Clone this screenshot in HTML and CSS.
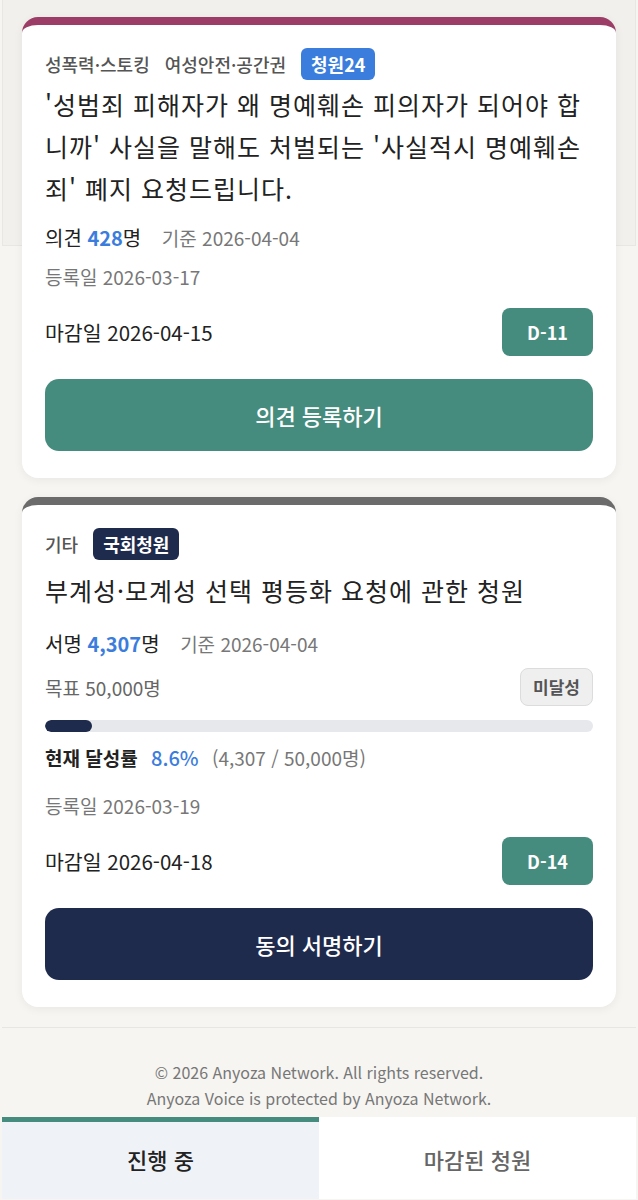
FILE: index.html
```html
<!DOCTYPE html>
<html lang="ko">
<head>
    <meta charset="UTF-8">
    <meta name="viewport" content="width=device-width, initial-scale=1.0">
    <title>Anyoza Voice - 진행 중인 청원</title>
    <link rel="stylesheet" href="styles.css">
</head>
<body>
    <div class="list">
        <div class="card card-opinion">
            <div class="tags">
                <span class="tag">성폭력·스토킹</span>
                <span class="tag">여성안전·공간권</span>
                <span class="source source-24">청원24</span>
            </div>
            <h2 class="title">'성범죄 피해자가 왜 명예훼손 피의자가 되어야 합니까' 사실을 말해도 처벌되는 '사실적시 명예훼손죄' 폐지 요청드립니다.</h2>
            <div class="count">의견 <strong>428</strong>명 <span class="basis">기준 2026-04-04</span></div>
            <div class="date">등록일 2026-03-17</div>
            <div class="deadline">
                <span>마감일 2026-04-15</span>
                <span class="dday">D-11</span>
            </div>
            <button class="action action-opinion">의견 등록하기</button>
        </div>

        <div class="card card-sign">
            <div class="tags">
                <span class="tag">기타</span>
                <span class="source source-assembly">국회청원</span>
            </div>
            <h2 class="title">부계성·모계성 선택 평등화 요청에 관한 청원</h2>
            <div class="count">서명 <strong>4,307</strong>명 <span class="basis">기준 2026-04-04</span></div>
            <div class="goal">
                <span>목표 50,000명</span>
                <span class="status">미달성</span>
            </div>
            <div class="progress"><div class="progress-fill" style="width: 8.6%"></div></div>
            <div class="rate"><b>현재 달성률</b> <span class="rate-value">8.6%</span> <span class="rate-detail">(4,307 / 50,000명)</span></div>
            <div class="date">등록일 2026-03-19</div>
            <div class="deadline">
                <span>마감일 2026-04-18</span>
                <span class="dday">D-14</span>
            </div>
            <button class="action action-sign">동의 서명하기</button>
        </div>
    </div>

    <footer>
        <p>© 2026 Anyoza Network. All rights reserved.</p>
        <p>Anyoza Voice is protected by Anyoza Network.</p>
    </footer>

    <nav class="tabs">
        <a href="#" class="tab active">진행 중</a>
        <a href="#" class="tab">마감된 청원</a>
    </nav>
</body>
</html>
```

FILE: styles.css
```css
body {
    font-family: 'Noto Sans CJK KR', 'Noto Sans', sans-serif;
    background-color: #f6f5f1;
    margin: 0;
    padding: 0;
    color: #222;
}
.list {
    position: relative;
    padding: 17px 22px 1px;
}
/* faint panel behind the first card */
.list::before {
    content: '';
    position: absolute;
    left: 2px;
    right: 2px;
    top: 0;
    height: 245px;
    background-color: #f1f0ec;
    border: 1px solid #e9e7e2;
    border-top: none;
}
.card {
    position: relative;
    background-color: white;
    border-radius: 16px;
    border-top: 8px solid #9b3d66;
    padding: 23px 23px 27px;
    margin-bottom: 19px;
    box-shadow: 0 2px 10px rgba(0,0,0,0.06);
}
.card-sign {
    border-top-color: #6b6b6b;
}
.tags {
    display: flex;
    align-items: center;
    gap: 15px;
    height: 32px;
}
.tag {
    font-size: 18px;
    font-weight: 500;
    color: #555;
}
.source {
    color: white;
    font-size: 18px;
    font-weight: bold;
    padding: 0 10px;
    line-height: 32px;
    border-radius: 6px;
}
.source-24 {
    background-color: #3b7ddd;
}
.source-assembly {
    background-color: #1f2b4d;
}
.title {
    font-size: 25px;
    font-weight: normal;
    letter-spacing: 1px;
    line-height: 42px;
    margin: 3px 0 0;
    color: #222;
}
.card-sign .title {
    margin-top: 9px;
}
.count {
    font-size: 20px;
    line-height: 28px;
    margin-top: 15px;
}
.card-sign .count {
    margin-top: 19px;
}
.count strong {
    color: #3b7ddd;
}
.basis {
    font-size: 19px;
    color: #777;
    margin-left: 15px;
}
.date {
    font-size: 19px;
    line-height: 28px;
    color: #777;
    margin-top: 11px;
}
.deadline, .goal {
    display: flex;
    justify-content: space-between;
    align-items: center;
    font-size: 20.5px;
}
.deadline {
    margin-top: 17px;
}
.dday {
    background-color: #458c7e;
    color: white;
    font-weight: bold;
    font-size: 18px;
    width: 91px;
    line-height: 48px;
    text-align: center;
    border-radius: 8px;
}
.goal {
    margin-top: 10px;
    color: #666;
    font-size: 19px;
}
.status {
    background-color: #efefef;
    border: 1px solid #dcdcdc;
    color: #555;
    font-weight: bold;
    font-size: 17px;
    line-height: 36px;
    padding: 0 12px;
    border-radius: 8px;
}
.progress {
    height: 12px;
    background-color: #e6e8ec;
    border-radius: 6px;
    margin-top: 14px;
    overflow: hidden;
}
.progress-fill {
    height: 100%;
    background-color: #1f2b4d;
    border-radius: 6px;
}
.rate {
    font-size: 19px;
    line-height: 28px;
    margin-top: 12px;
}
.rate-value {
    color: #3b7ddd;
    font-size: 20px;
    font-weight: 500;
    margin: 0 8px;
}
.rate-detail {
    color: #777;
}
.card-sign .date {
    margin-top: 20px;
}
.action {
    display: block;
    width: 100%;
    height: 72px;
    margin-top: 23px;
    border: none;
    border-radius: 14px;
    color: white;
    font-family: inherit;
    font-size: 22px;
    font-weight: 500;
    cursor: pointer;
}
.action-opinion {
    background-color: #458c7e;
}
.action-sign {
    background-color: #1f2b4d;
}
footer {
    border-top: 1px solid #e8e6e1;
    margin: 0 2px;
    padding: 31px 0 6px;
    text-align: center;
    color: #777;
    font-size: 16px;
}
footer p {
    margin: 0;
    line-height: 26px;
}
.tabs {
    display: flex;
    margin: 0 2px;
    background-color: white;
}
.tab {
    flex: 1;
    height: 77px;
    line-height: 74px;
    text-align: center;
    text-decoration: none;
    font-size: 22px;
    font-weight: 500;
    color: #666;
    border-top: 5px solid transparent;
}
.tab.active {
    background-color: #eff3f8;
    color: #222;
    border-top-color: #458c7e;
}
```
